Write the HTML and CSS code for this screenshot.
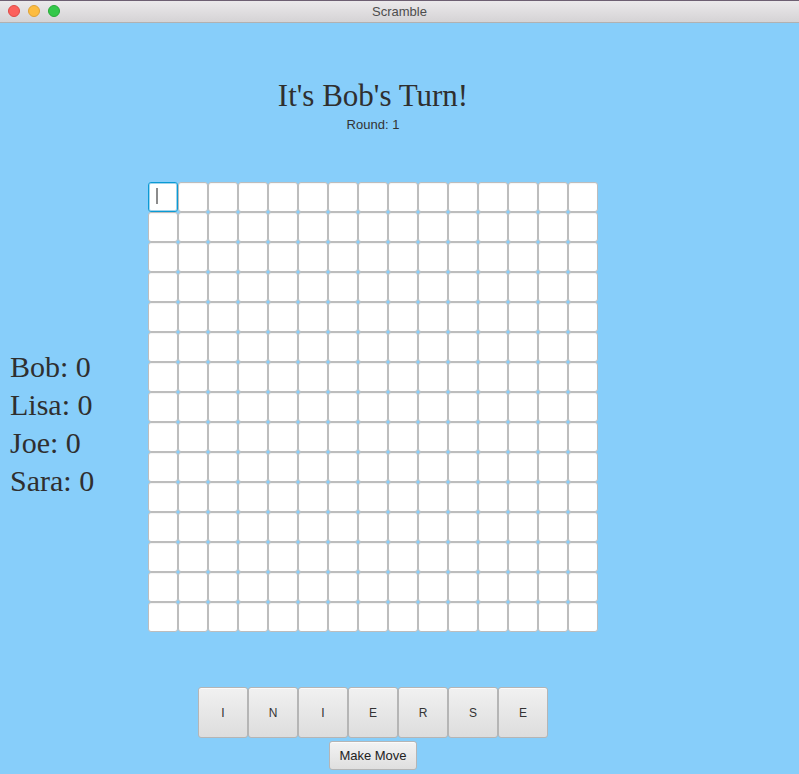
FILE: index.html
```html
<!DOCTYPE html>
<html>
<head>
<meta charset="utf-8">
<title>Scramble</title>
<link rel="stylesheet" href="styles.css">
</head>
<body>
<div class="window">
  <div class="titlebar">
    <div class="lights">
      <span class="light red"></span>
      <span class="light yellow"></span>
      <span class="light green"></span>
    </div>
    <div class="title">Scramble</div>
  </div>
  <div class="app">
    <div class="scores">
      <div class="score">Bob: 0</div>
      <div class="score">Lisa: 0</div>
      <div class="score">Joe: 0</div>
      <div class="score">Sara: 0</div>
    </div>
    <div class="center">
      <h1 class="heading">It's Bob's Turn!</h1>
      <div class="round">Round: 1</div>
      <div class="board" id="board"></div>
      <div class="tiles">
        <button class="tile">I</button>
        <button class="tile">N</button>
        <button class="tile">I</button>
        <button class="tile">E</button>
        <button class="tile">R</button>
        <button class="tile">S</button>
        <button class="tile">E</button>
      </div>
      <button class="move">Make Move</button>
    </div>
  </div>
</div>
<script src="script.js"></script>
</body>
</html>
```

FILE: script.js
```js
var board = document.getElementById('board');
for (var i = 0; i < 225; i++) {
  var c = document.createElement('div');
  c.className = i === 0 ? 'cell focused' : 'cell';
  if (i === 0) {
    var k = document.createElement('span');
    k.className = 'caret';
    c.appendChild(k);
  }
  board.appendChild(c);
}
```

FILE: styles.css
```css
html, body {
  margin: 0;
  padding: 0;
}
body {
  background: #87cefa;
  font-family: "Liberation Sans", Arial, sans-serif;
  color: #333;
}
.window {
  width: 799px;
  height: 774px;
  overflow: hidden;
  background: #87cefa;
}
.titlebar {
  border-top: 1px solid #6d5f72;
  border-bottom: 1px solid #b1b1b1;
  box-sizing: border-box;
  height: 23px;
  background: linear-gradient(#ebe9eb, #d5d3d5);
  display: flex;
  align-items: center;
  justify-content: center;
  position: relative;
}
.lights {
  position: absolute;
  left: 8px;
  top: 4px;
  display: flex;
  gap: 8px;
}
.light {
  width: 12px;
  height: 12px;
  border-radius: 50%;
  box-sizing: border-box;
}
.red { background: #fc605c; border: 1px solid #de4a46; }
.yellow { background: #fdbc40; border: 1px solid #dea236; }
.green { background: #34c84a; border: 1px solid #27aa37; }
.title {
  font-size: 13px;
  color: #4d4d4d;
  margin-top: -1px;
}
.app {
  display: flex;
}
.scores {
  width: 138px;
  padding-left: 10px;
  padding-top: 325px;
}
.score {
  font-family: "Liberation Serif", "Times New Roman", serif;
  font-size: 30px;
  line-height: 38px;
  color: #2f2f2f;
  white-space: nowrap;
}
.center {
  width: 450px;
  display: flex;
  flex-direction: column;
  align-items: center;
}
.heading {
  margin: 55px 0 0;
  font-family: "Liberation Serif", "Times New Roman", serif;
  font-weight: normal;
  font-size: 31px;
  line-height: 36px;
  color: #2f2f2f;
}
.round {
  margin-top: 3px;
  font-size: 13px;
  line-height: 16px;
  color: #333;
}
.board {
  margin-top: 49px;
  display: grid;
  grid-template-columns: repeat(15, 30px);
  grid-auto-rows: 30px;
}
.cell {
  box-sizing: border-box;
  background: #fff;
  border: 1px solid #bdbdbd;
  border-radius: 3px;
  box-shadow: inset 0 1px 1px rgba(0,0,0,0.04);
  position: relative;
}
.cell.focused {
  border: 1px solid #0a9ad4;
  box-shadow: inset 0 0 0 1px #9fd3ec;
}
.caret {
  position: absolute;
  left: 7px;
  top: 5px;
  width: 2px;
  height: 16px;
  background: #8c8c8c;
}
.tiles {
  margin-top: 55px;
  display: flex;
}
.tile {
  width: 50px;
  height: 51px;
  box-sizing: border-box;
  margin: 0;
  padding: 0;
  border: 1px solid #b5b5b5;
  border-radius: 3px;
  background: linear-gradient(#f1f1f1, #dddddd);
  box-shadow: inset 0 1px 0 #fbfbfb;
  font-family: "Liberation Sans", Arial, sans-serif;
  font-size: 12px;
  color: #333;
}
.move {
  margin-top: 3px;
  width: 88px;
  height: 29px;
  box-sizing: border-box;
  padding: 0;
  border: 1px solid #b5b5b5;
  border-radius: 3px;
  background: linear-gradient(#f3f3f3, #dfdfdf);
  box-shadow: inset 0 1px 0 #fbfbfb;
  font-family: "Liberation Sans", Arial, sans-serif;
  font-size: 13px;
  color: #222;
}
```
